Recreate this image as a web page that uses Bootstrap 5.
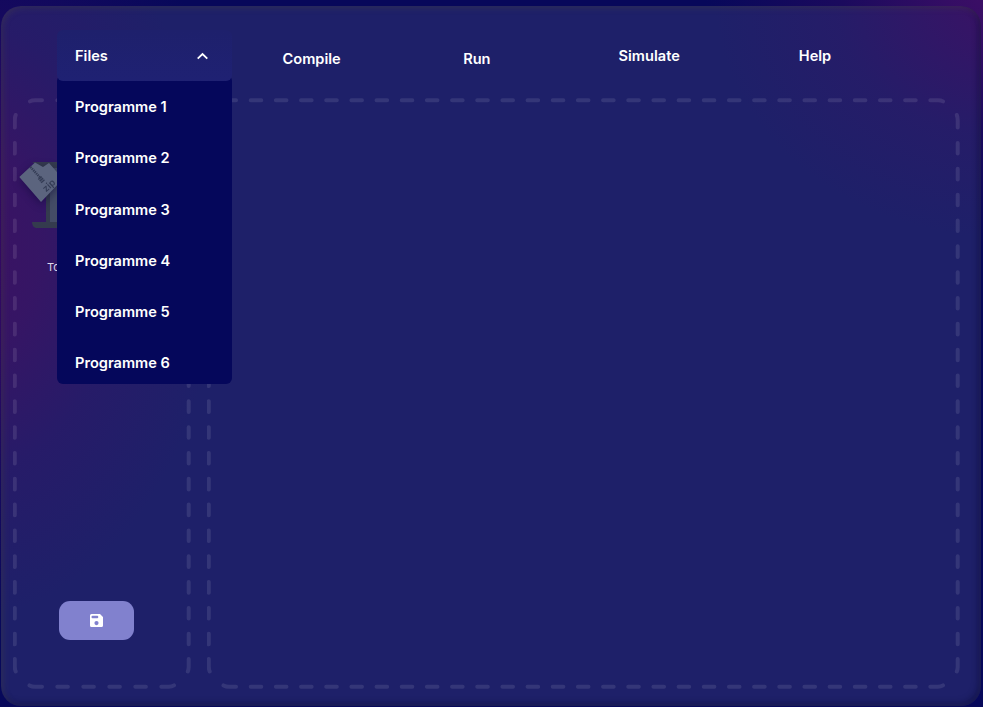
<!DOCTYPE html>
<html lang="en">
<head>
<meta charset="utf-8">
<meta name="viewport" content="width=device-width, initial-scale=1">
<title>Programme editor</title>
<link rel="stylesheet" href="https://cdn.jsdelivr.net/npm/bootstrap@5.3.0/dist/css/bootstrap.min.css">
<style>
body{font-family:Inter,"Noto Sans",sans-serif;font-size:14.6px;font-weight:600;color:#fff;height:707px;padding:6px 2px 1px 1px;
 background:
 radial-gradient(ellipse 300px 260px at 1005px -12px,#400f66 0%,rgba(60,14,102,.85) 20%,rgba(46,12,96,.5) 55%,rgba(30,10,92,0) 100%),
 radial-gradient(ellipse 290px 390px at -40px 250px,#380862 0%,rgba(46,9,98,.85) 35%,rgba(35,10,98,.5) 62%,rgba(20,10,92,0) 100%),
 #07085a}
.shell{border-radius:20px;
 background:
 radial-gradient(ellipse 290px 240px at 1003px -8px,#3b1264 0%,rgba(54,20,102,.9) 20%,rgba(42,26,104,.6) 58%,rgba(30,32,105,0) 100%),
 radial-gradient(ellipse 260px 370px at -41px 244px,#3c1162 0%,rgba(56,20,100,.9) 30%,rgba(44,24,104,.6) 62%,rgba(30,32,105,0) 100%),
 #1e2069;
 box-shadow:inset 2px 2px 6px rgba(90,85,60,.28),inset -3px -3px 6px rgba(8,8,50,.4)}
.topbar{height:92px}
.topbar .btn{--bs-btn-color:#fff;--bs-btn-hover-color:#fff;--bs-btn-font-size:14.6px;--bs-btn-font-weight:600;--bs-btn-padding-x:0;--bs-btn-padding-y:0;line-height:20px;border:0;position:static}
.compile{margin:43px 0 0 281.5px}
.run{margin:43px 0 0 122.5px}
.simulate{margin:40px 0 0 128px}
.help{margin:40px 0 0 119px}
.stage{grid-template-columns:178px 753px;column-gap:16px;height:591px;padding-left:12px}
.zone{grid-template:100%/100%}
.zone>*{grid-area:1/1}
.dashes{fill:none;stroke:#fff;stroke-opacity:.1;stroke-width:4;stroke-linecap:round;width:100%;height:100%}
.files{width:174.5px;height:51px;border-radius:6px;background:linear-gradient(#1e206c,#1f2173)}
.files-list{position:absolute;left:57px;top:75px;width:174.5px;height:309px;border-radius:6px;background:#05075b;padding-top:7.4px}
.files-list .dropdown-item{height:51.25px;padding:0 18px;font-weight:600;color:#fff}
.files-btn{position:absolute;left:57px;top:30px;padding:2px 21px 0 18px}
.tool-label{font-size:11px;font-weight:400;line-height:14px;padding-left:34px;margin-top:30px;color:#dcd8ea}
.save{width:75px;height:38.5px;border-radius:11px;background:#8181ce;margin:0 0 49.5px 45.7px;padding:0}
.tool-art{width:70px;height:72px;margin:60px 0 0 5px;overflow:visible}
.zip-card{filter:drop-shadow(0 3px 4px rgba(10,5,50,.45))}
</style>
<script src="https://cdn.jsdelivr.net/npm/bootstrap@5.3.0/dist/js/bootstrap.bundle.min.js"></script>
</head>
<body class="overflow-hidden position-relative">
<main class="shell h-100 d-flex flex-column">
 <nav class="topbar d-flex">
  <button class="btn compile align-self-start">Compile</button>
  <button class="btn run align-self-start">Run</button>
  <button class="btn simulate align-self-start">Simulate</button>
  <button class="btn help align-self-start">Help</button>
 </nav>
 <section class="stage d-grid">
  <aside class="zone d-grid">
   <svg class="dashes" viewBox="13 98 178 591">
    <path stroke-dasharray="10.6 15.23" d="M14.8 143V656M188.7 143V656"/>
    <path stroke-dasharray="10.6 15.4" d="M57.3 100.2H157M57.3 686.7H157"/>
    <path d="M14.8 127.5V120.2Q14.8 117.500 15.7 115M30 101.400Q32 100.200 34.800 100.200H42M14.800 659V666.700Q14.800 669.200 15.700 671.500M29.500 685.400Q32 686.700 34.800 686.700H42M188.700 659V666.700Q188.700 669.200 187.800 671.500M174 685.400Q172 686.700 168.700 686.700H161.300"/>
   </svg>
   <div class="d-flex flex-column">
    <svg class="tool-art" viewBox="18 158 70 72">
     <path fill="#343b4e" d="M32 162H70V168H50V222H70V228H36Q32 227 32 222H46V169Z"/>
     <path fill="#444c66" d="M50 168H70V222H50Z"/>
     <g class="zip-card">
      <path fill="#5b647e" d="M19.300 177L35 162.500L43 167L49 163L63 179L41 202Z"/>
      <path fill="none" stroke="#343c55" stroke-width="2.400" stroke-dasharray="1.300 .8" d="M30.500 167L40.500 178"/>
      <path fill="none" stroke="#343c55" stroke-width="4.500" stroke-dasharray="1.500 .6" d="M39.500 177.500L43.500 182"/>
      <text x="46" y="192.500" font-size="9.500" font-weight="600" fill="#343c55" transform="rotate(-42 46 192.500)">zip</text>
     </g>
    </svg>
    <div class="tool-label">Tools</div>
    <button class="save btn mt-auto d-flex align-items-center justify-content-center" aria-label="Save">
     <svg width="13" height="13" viewBox="0 0 13 13"><path fill="#fff" fill-rule="evenodd" d="M1.500 0H10L13 3V11.500Q13 13 11.500 13H1.500Q0 13 0 11.500V1.500Q0 0 1.500 0ZM2.500 1.800Q1.500 1.800 1.500 3T2.500 4.200H7.200Q8.300 4.200 8.300 3T7.200 1.800ZM6.500 7A2.100 2.100 0 1 0 6.500 11.200A2.100 2.100 0 1 0 6.500 7Z"/></svg>
    </button>
   </div>
  </aside>
  <div class="zone d-grid">
   <svg class="dashes" viewBox="207 98 753 591">
    <path stroke-dasharray="10.6 15.23" d="M208.800 143V656M957.700 143V656"/>
    <path stroke-dasharray="10.6 14.57" d="M250.700 100.200H926M250.700 686.700H926"/>
    <path d="M224 101.400Q226 100.200 228.800 100.200H236M208.800 659V666.700Q208.800 669.200 209.700 671.500M223.500 685.400Q226 686.700 228.800 686.700H236M957.700 659V666.700Q957.700 669.200 956.800 671.500M943 685.400Q941 686.700 937.700 686.700H930.300M957.700 127.500V120.200Q957.700 117.500 956.800 115M943 101.400Q941 100.200 937.700 100.200H930.300"/>
   </svg>
  </div>
 </section>
</main>
<div class="files-list">
 <a class="dropdown-item d-flex align-items-center" href="#">Programme 1</a>
 <a class="dropdown-item d-flex align-items-center" href="#">Programme 2</a>
 <a class="dropdown-item d-flex align-items-center" href="#">Programme 3</a>
 <a class="dropdown-item d-flex align-items-center" href="#">Programme 4</a>
 <a class="dropdown-item d-flex align-items-center" href="#">Programme 5</a>
 <a class="dropdown-item d-flex align-items-center" href="#">Programme 6</a>
</div>
<div class="files files-btn d-flex align-items-center justify-content-between"><span>Files</span>
 <svg width="16" height="16" viewBox="0 0 16 16" fill="none" stroke="#fff" stroke-width="1.800"><path d="M2.700 9.700L7.500 5L12.300 9.700"/></svg>
</div>
</body>
</html>
